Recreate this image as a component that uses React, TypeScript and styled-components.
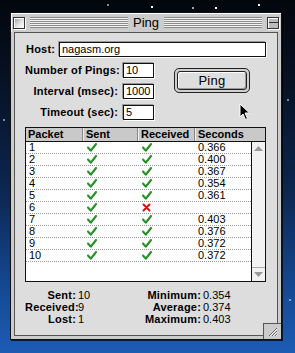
import React from 'react';
import styled, { createGlobalStyle } from 'styled-components';

const Global = createGlobalStyle`
  html, body { margin: 0; padding: 0; }
  body {
    width: 295px;
    height: 353px;
    overflow: hidden;
    font-family: "Liberation Sans", Arial, sans-serif;
    color: #000;
  }
`;

const Desktop = styled.div`
  position: relative;
  width: 295px;
  height: 353px;
  box-sizing: border-box;
  padding: 12px 0 0 10px;
  background:
    radial-gradient(circle at 152px 7px, #fff 0 0.8px, transparent 1.3px),
    radial-gradient(circle at 216px 8px, #fff 0 0.8px, transparent 1.3px),
    radial-gradient(circle at 259px 5px, #fff 0 0.9px, transparent 1.4px),
    radial-gradient(circle at 193px 8px, #ccd 0 0.6px, transparent 1.1px),
    radial-gradient(circle at 108px 5px, #aab 0 0.6px, transparent 1.1px),
    radial-gradient(circle at 288px 100px, #9ab 0 0.6px, transparent 1.1px),
    radial-gradient(circle at 4px 120px, #9ab 0 0.6px, transparent 1.1px),
    radial-gradient(circle at 290px 300px, #9bd 0 0.6px, transparent 1.1px),
    linear-gradient(to bottom, #03060d 0%, #071327 25%, #0c2752 55%, #15478f 80%, #1d5cb6 100%);
`;

const Window = styled.div`
  position: relative;
  width: 272px;
  height: 328px;
  box-sizing: border-box;
  border: 1px solid #111;
  background: #cccccc;
  box-shadow: 1px 1px 0 rgba(0, 0, 0, 0.7);
  display: flex;
  flex-direction: column;
`;

const TitleBar = styled.div`
  height: 19px;
  flex: none;
  display: flex;
  align-items: center;
  padding: 0 2px 0 2px;
  box-shadow: inset 1px 1px 0 #fff;
`;

const Box = styled.div<{ $collapse?: boolean }>`
  width: 10px;
  height: 10px;
  flex: none;
  border: 1px solid #333;
  background: ${(p) =>
    p.$collapse
      ? 'linear-gradient(to bottom, #bbb 0 4px, #333 4px 5px, #bbb 5px 10px)'
      : 'linear-gradient(135deg, #999 0%, #e8e8e8 60%, #fff 100%)'};
  box-shadow: 1px 1px 0 #fff, inset 1px 1px 0 #fff;
`;

const Stripes = styled.div`
  flex: 1;
  height: 11px;
  margin: 0 5px;
  background: repeating-linear-gradient(to bottom, #8a8a8a 0 1px, #f4f4f4 1px 2px);
`;

const Title = styled.div`
  font-size: 13px;
  line-height: 19px;
  padding: 0;
`;

const Content = styled.div`
  flex: 1;
  margin: 0 3px 3px 3px;
  border: 1px solid #555;
  background: #dddddd;
  padding: 9px 11px 0 10px;
  display: flex;
  flex-direction: column;
`;

const HostRow = styled.div`
  display: flex;
  align-items: center;
  height: 15px;
`;

const Label = styled.div`
  font-weight: bold;
  font-size: 11px;
  letter-spacing: 0.2px;
  white-space: nowrap;
  line-height: 15px;
`;

const HostLabel = styled(Label)`
  padding-left: 1px;
  width: 33px;
`;

const Input = styled.div<{ $grow?: boolean }>`
  box-sizing: border-box;
  height: 15px;
  ${(p) => (p.$grow ? 'flex: 1;' : 'width: 31px;')}
  background: #fff;
  border: 1px solid #111;
  box-shadow: -1px -1px 0 #999, 1px 1px 0 #fff;
  font-size: 11px;
  line-height: 13px;
  padding-left: 2px;
  white-space: nowrap;
  overflow: hidden;
`;

const Settings = styled.div`
  display: flex;
  align-items: flex-start;
  margin-top: 6px;
`;

const FieldGrid = styled.div`
  display: grid;
  grid-template-columns: 93px 31px;
  column-gap: 5px;
  row-gap: 6px;
  & > ${Label} {
    text-align: right;
  }
`;

const PingButton = styled.div`
  margin-left: 20px;
  margin-top: 5px;
  width: 76px;
  height: 25px;
  box-sizing: border-box;
  border: 1px solid #222;
  border-radius: 5px;
  padding: 2px;
  background: #cfcfcf;
  display: flex;
`;

const ButtonFace = styled.div`
  flex: 1;
  border: 1px solid #222;
  border-radius: 3px;
  background: #dedede;
  box-shadow: inset 1px 1px 0 #fff, inset -1px -1px 0 #999;
  display: flex;
  align-items: center;
  justify-content: center;
  font-size: 13px;
  letter-spacing: 0.3px;
`;

const List = styled.div`
  margin-top: 7px;
  width: 241px;
  height: 155px;
  box-sizing: border-box;
  border: 1px solid #111;
  background: #fff;
  display: flex;
  flex-direction: column;
`;

const Header = styled.div`
  height: 13px;
  flex: none;
  display: grid;
  grid-template-columns: 57px 55px 57px 1fr;
  background: #c9c9c9;
  border-bottom: 1px solid #111;
`;

const HeadCell = styled.div`
  font-weight: bold;
  font-size: 11px;
  line-height: 13px;
  padding-left: 2px;
  border-left: 1px solid #eee;
  border-right: 1px solid #888;
  white-space: nowrap;
  &:first-child { border-left: none; }
  &:last-child { border-right: none; }
`;

const ListBody = styled.div`
  flex: 1;
  display: flex;
`;

const Rows = styled.div`
  flex: 1;
`;

const Row = styled.div`
  height: 11px;
  display: grid;
  grid-template-columns: 57px 55px 57px 1fr;
  border-bottom: 1px dotted #9a9a9a;
  font-size: 11px;
  line-height: 11px;
`;

const Cell = styled.div<{ $pad: number }>`
  padding-left: ${(p) => p.$pad}px;
  display: flex;
  align-items: center;
`;

const Scrollbar = styled.div`
  width: 13px;
  flex: none;
  border-left: 1px solid #111;
  background: #f2f2f2;
  display: flex;
  flex-direction: column;
  justify-content: space-between;
`;

const Arrow = styled.div<{ $down?: boolean }>`
  height: 13px;
  display: flex;
  align-items: center;
  justify-content: center;
  ${(p) => (p.$down ? 'border-top: 1px solid #aaa;' : '')}
`;

const Stats = styled.div`
  margin-top: 7px;
  display: flex;
`;

const StatGrid = styled.div<{ $label: number; $width: number }>`
  display: grid;
  grid-template-columns: ${(p) => p.$label}px auto;
  width: ${(p) => p.$width}px;
  grid-auto-rows: 12px;
  align-content: start;
  & > ${Label} {
    text-align: right;
    line-height: 12px;
  }
`;

const StatValue = styled.div`
  font-size: 11px;
  line-height: 12px;
  padding-left: 2px;
`;

const GrowBox = styled.div`
  position: absolute;
  right: 0;
  bottom: 0;
  width: 18px;
  height: 16px;
  box-sizing: border-box;
  background: #cccccc;
  border-top: 1px solid #555;
  border-left: 1px solid #555;
  display: flex;
  align-items: center;
  justify-content: center;
`;

const Cursor = styled.svg`
  position: absolute;
  left: 239px;
  top: 103px;
`;

const Check = () => (
  <svg width="10" height="9" viewBox="0 0 10 9">
    <path d="M1 4.5 L3.8 7.6 L9 1" fill="none" stroke="#2f9e2f" strokeWidth="2.2" strokeLinecap="round" strokeLinejoin="round" />
    <path d="M1.3 5.4 L3.8 8 L9 1.8" fill="none" stroke="#1d7a1d" strokeWidth="0.8" strokeLinecap="round" />
  </svg>
);

const Cross = () => (
  <svg width="9" height="9" viewBox="0 0 9 9">
    <path d="M1.5 1.5 L7.5 7.5 M7.5 1.5 L1.5 7.5" stroke="#d41414" strokeWidth="2" strokeLinecap="round" />
  </svg>
);

const data: { n: number; ok: boolean; s: string }[] = [
  { n: 1, ok: true, s: '0.366' },
  { n: 2, ok: true, s: '0.400' },
  { n: 3, ok: true, s: '0.367' },
  { n: 4, ok: true, s: '0.354' },
  { n: 5, ok: true, s: '0.361' },
  { n: 6, ok: false, s: '' },
  { n: 7, ok: true, s: '0.403' },
  { n: 8, ok: true, s: '0.376' },
  { n: 9, ok: true, s: '0.372' },
  { n: 10, ok: true, s: '0.372' },
];

export default function App() {
  return (
    <>
      <Global />
      <Desktop>
        <Window>
          <TitleBar>
            <Box />
            <Stripes />
            <Title>Ping</Title>
            <Stripes />
            <Box $collapse />
          </TitleBar>
          <Content>
            <HostRow>
              <HostLabel>Host:</HostLabel>
              <Input $grow>nagasm.org</Input>
            </HostRow>
            <Settings>
              <FieldGrid>
                <Label>Number of Pings:</Label>
                <Input>10</Input>
                <Label>Interval (msec):</Label>
                <Input>1000</Input>
                <Label>Timeout (sec):</Label>
                <Input>5</Input>
              </FieldGrid>
              <PingButton>
                <ButtonFace>Ping</ButtonFace>
              </PingButton>
            </Settings>
            <List>
              <Header>
                <HeadCell>Packet</HeadCell>
                <HeadCell>Sent</HeadCell>
                <HeadCell>Received</HeadCell>
                <HeadCell>Seconds</HeadCell>
              </Header>
              <ListBody>
                <Rows>
                  {data.map((r) => (
                    <Row key={r.n}>
                      <Cell $pad={3}>{r.n}</Cell>
                      <Cell $pad={4}><Check /></Cell>
                      <Cell $pad={4}>{r.ok ? <Check /> : <Cross />}</Cell>
                      <Cell $pad={3}>{r.s}</Cell>
                    </Row>
                  ))}
                </Rows>
                <Scrollbar>
                  <Arrow>
                    <svg width="9" height="5" viewBox="0 0 9 5"><path d="M4.5 0 L9 5 L0 5 Z" fill="#9a9a9a" /></svg>
                  </Arrow>
                  <Arrow $down>
                    <svg width="9" height="5" viewBox="0 0 9 5"><path d="M0 0 L9 0 L4.5 5 Z" fill="#9a9a9a" /></svg>
                  </Arrow>
                </Scrollbar>
              </ListBody>
            </List>
            <Stats>
              <StatGrid $label={51} $width={120}>
                <Label>Sent:</Label>
                <StatValue>10</StatValue>
                <Label>Received:</Label>
                <StatValue>9</StatValue>
                <Label>Lost:</Label>
                <StatValue>1</StatValue>
              </StatGrid>
              <StatGrid $label={56} $width={100}>
                <Label>Minimum:</Label>
                <StatValue>0.354</StatValue>
                <Label>Average:</Label>
                <StatValue>0.374</StatValue>
                <Label>Maximum:</Label>
                <StatValue>0.403</StatValue>
              </StatGrid>
            </Stats>
          </Content>
          <GrowBox>
            <svg width="11" height="11" viewBox="0 0 11 11">
              <path d="M10 2 L2 10 M10 5 L5 10 M10 8 L8 10" stroke="#666" strokeWidth="1" />
              <path d="M10 3 L3 10 M10 6 L6 10 M10 9 L9 10" stroke="#fff" strokeWidth="1" />
            </svg>
          </GrowBox>
        </Window>
        <Cursor width="12" height="18" viewBox="0 0 12 18">
          <path d="M1 1 L1 14 L4 11 L6.5 16.5 L8.5 15.5 L6 10 L10.5 10 Z" fill="#000" stroke="#fff" strokeWidth="1" strokeLinejoin="miter" />
        </Cursor>
      </Desktop>
    </>
  );
}
